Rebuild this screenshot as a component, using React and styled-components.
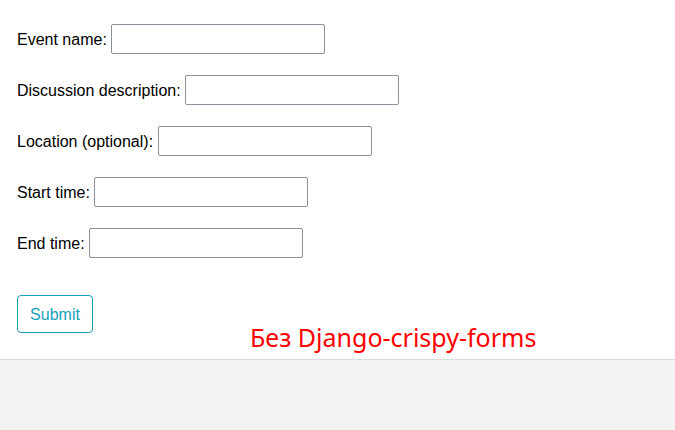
import styled, { createGlobalStyle } from "styled-components";

const Global = createGlobalStyle`
  html, body {
    margin: 0;
    padding: 0;
    background: #f3f3f3;
  }
`;

const Page = styled.div`
  position: relative;
  width: 675px;
  height: 430px;
  background: #f3f3f3;
  font-family: "Liberation Sans", Arial, sans-serif;
`;

const Panel = styled.div`
  height: 360px;
  box-sizing: border-box;
  background: #ffffff;
  border-bottom: 1px solid #dcdcdc;
  padding: 24px 0 0 17px;
`;

const Form = styled.form`
  display: flex;
  flex-direction: column;
  align-items: flex-start;
`;

const Row = styled.div`
  display: flex;
  align-items: center;
  gap: 4.5px;
  margin-bottom: 21px;
`;

const Label = styled.label`
  font-size: 16px;
  color: #000;
  padding-top: 2px;
`;

const Field = styled.input`
  width: 214px;
  height: 30px;
  box-sizing: border-box;
  border: 1px solid #8f8f9d;
  border-radius: 2px;
  background: #fff;
  padding: 0 6px;
  font-family: "Liberation Sans", Arial, sans-serif;
  font-size: 16px;
  outline: none;
`;

const Submit = styled.button`
  margin-top: 16px;
  width: 76px;
  height: 38px;
  box-sizing: border-box;
  padding: 2px 0 0;
  background: #fff;
  border: 1px solid #17a2b8;
  border-radius: 4px;
  color: #17a2b8;
  font-family: "Liberation Sans", Arial, sans-serif;
  font-size: 16px;
  cursor: pointer;
`;

const Caption = styled.div`
  position: absolute;
  left: 250px;
  top: 321px;
  font-family: "Noto Sans", "Open Sans", sans-serif;
  font-size: 25px;
  line-height: 32px;
  color: #ff0000;
  white-space: nowrap;
`;

const fields = [
  ["event", "Event name:"],
  ["desc", "Discussion description:"],
  ["loc", "Location (optional):"],
  ["start", "Start time:"],
  ["end", "End time:"],
];

export default function App() {
  return (
    <Page>
      <Global />
      <Panel>
        <Form onSubmit={(e) => e.preventDefault()}>
          {fields.map(([id, text]) => (
            <Row key={id}>
              <Label htmlFor={id}>{text}</Label>
              <Field id={id} type="text" />
            </Row>
          ))}
          <Submit type="submit">Submit</Submit>
        </Form>
      </Panel>
      <Caption>Без Django-crispy-forms</Caption>
    </Page>
  );
}
